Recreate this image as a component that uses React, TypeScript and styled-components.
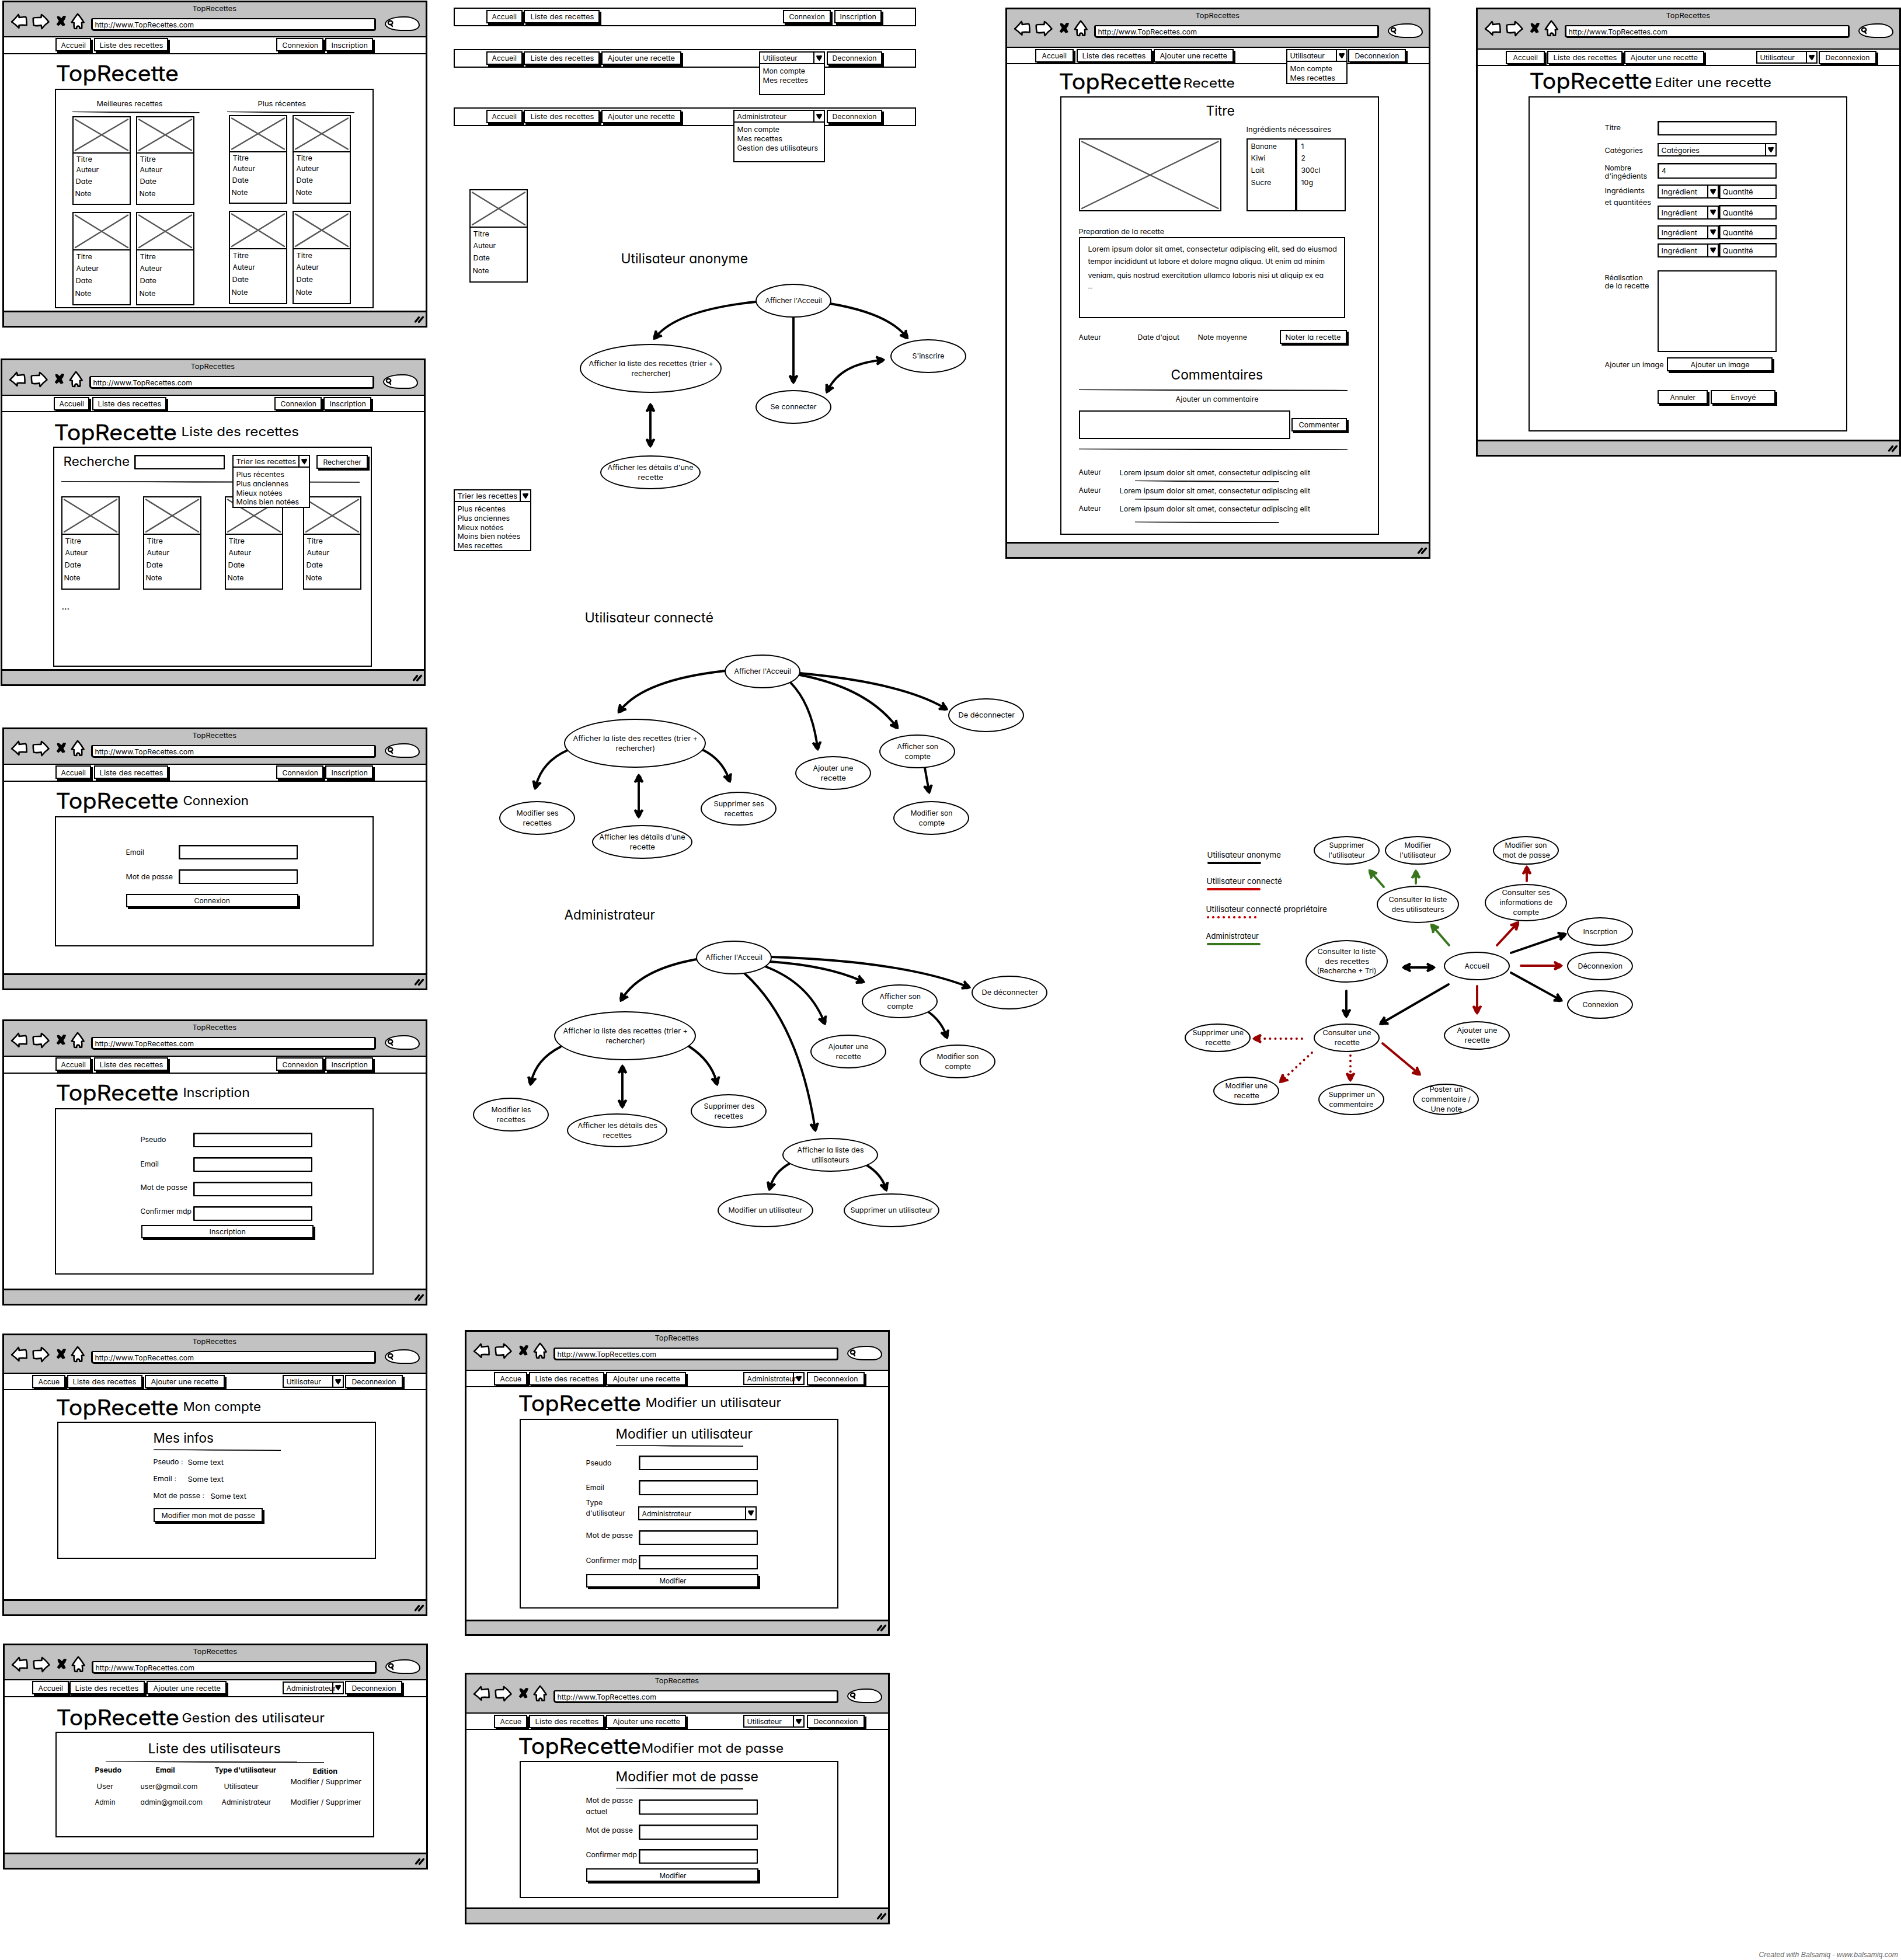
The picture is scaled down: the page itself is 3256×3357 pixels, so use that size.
import React, { useLayoutEffect, useRef } from "react";
import styled, { createGlobalStyle } from "styled-components";

const INK = "#000";
const CHROME = "#c2c2c2";

const Global = createGlobalStyle`
  * { box-sizing: border-box; }
  html, body { margin: 0; background: #fff; }
  body {
    font-family: Inter, "Open Sans", sans-serif;
    font-feature-settings: "cv11", "ss03";
    color: ${INK};
  }
`;

/* ---------- lettering ---------- */

const WIDTHS: Record<string, number> = {
  "Accueil": 43, "Accue": 37, "Liste des recettes": 109.5, "Ajouter une recette": 116,
  "Connexion": 62, "Inscription": 63, "Deconnexion": 76.5, "Utilisateur": 60, "Administrateur": 85,
  "Titre": 28, "Auteur": 39, "Date": 29, "Note": 28.5, "Meilleures recettes": 113.5,
  "Plus récentes": 83, "Plus anciennes": 90, "Mieux notées": 79.5, "Moins bien notées": 108,
  "Mes recettes": 78, "Mon compte": 73, "Trier les recettes": 103, "Gestion des utilisateurs": 139,
  "Rechercher": 66, "http://www.TopRecettes.com": 170, "TopRecettes": 76, "Email": 32,
  "Mot de passe": 81, "Confirmer mdp": 88, "Pseudo": 44.5, "Pseudo :": 51.5, "Email :": 40,
  "Mot de passe :": 88, "Some text": 62, "Modifier mon mot de passe": 161, "User": 29, "Admin": 35.5,
  "user@gmail.com": 98.5, "admin@gmail.com": 107, "Type d'utilisateur": 106, "Edition": 43,
  "Modifier / Supprimer": 122, "Modifier": 46.5, "Type": 29, "d'utilisateur": 68, "actuel": 37,
  "Ingrédients nécessaires": 146, "Banane": 45, "Kiwi": 25.5, "Lait": 23.5, "Sucre": 35.5,
  "300cl": 33.5, "10g": 21, "Preparation de la recette": 147, "Date d'ajout": 72, "Note moyenne": 85,
  "Noter la recette": 95.5, "Ajouter un commentaire": 142.5, "Commenter": 70,
  "Lorem ipsum dolor sit amet, consectetur adipiscing elit": 327,
  "Lorem ipsum dolor sit amet, consectetur adipiscing elit, sed do eiusmod": 427,
  "tempor incididunt ut labore et dolore magna aliqua. Ut enim ad minim": 406,
  "veniam, quis nostrud exercitation ullamco laboris nisi ut aliquip ex ea": 404,
  "Catégories": 66, "Nombre": 46, "d'ingédients": 73, "Ingrédients": 69, "et quantitées": 80,
  "Ingrédient": 62, "Quantité": 52.5, "Réalisation": 66, "de la recette": 76.5,
  "Ajouter un image": 101.5, "Annuler": 44, "Envoyé": 43.5,
  "Afficher l'Acceuil": 98, "Afficher la liste des recettes (trier +": 214, "rechercher)": 68,
  "Se connecter": 79.5, "S'inscrire": 55.5, "Afficher les détails d'une": 147.5, "recette": 44,
  "De déconnecter": 97, "Afficher son": 71, "compte": 45, "Ajouter une": 69.5, "Modifier ses": 72.5,
  "recettes": 50, "Supprimer ses": 87, "Modifier son": 72.5, "Modifier les": 68.5,
  "Supprimer des": 87, "Afficher les détails des": 137, "Afficher la liste des": 114.5,
  "utilisateurs": 64.5, "Modifier un utilisateur": 127.5, "Supprimer un utilisateur": 141.5,
  "Supprimer": 61, "l'utilisateur": 63, "mot de passe": 82, "Consulter la liste": 100.5,
  "des utilisateurs": 90.5, "Consulter ses": 83, "informations de": 91, "Inscrption": 59.5,
  "Déconnexion": 77, "des recettes": 76, "(Recherche + Tri)": 102.5, "Consulter une": 83.5,
  "Supprimer une": 88, "Modifier une": 73, "Supprimer un": 80, "commentaire": 76.5,
  "Poster un": 57.5, "commentaire /": 85, "Une note": 54,
};

const Slot = styled.span`
  display: inline-block;
  flex: none;
  white-space: pre;
  text-align: left;
`;

const Glyphs = styled.span<{ $size: number; $bold?: boolean }>`
  display: inline-block;
  padding-left: 0.5px;
  transform-origin: 0 50%;
  font-size: ${(p) => p.$size}px;
  font-weight: ${(p) => (p.$bold ? 700 : 400)};
`;

// Text widened so that it fills its lettering width.
function T({ children, w, size = 12, bold }: { children: string; w?: number; size?: number; bold?: boolean }) {
  const slot = useRef<HTMLSpanElement>(null);
  const glyphs = useRef<HTMLSpanElement>(null);
  const target = w ?? WIDTHS[children];
  useLayoutEffect(() => {
    const box = slot.current;
    const el = glyphs.current;
    if (!box || !el || !target) return;
    el.style.transform = "none";
    const natural = el.getBoundingClientRect().width;
    box.style.width = `${target}px`;
    el.style.transform = `scaleX(${target / natural})`;
  }, [children, target, size]);
  return (
    <Slot ref={slot}>
      <Glyphs ref={glyphs} $size={size} $bold={bold}>{children}</Glyphs>
    </Slot>
  );
}

/* ---------- layout primitives ---------- */

const Board = styled.main`
  position: relative;
  width: 3256px;
  height: 3357px;
  overflow: hidden;
  background: #fff;
`;

const Pinned = styled.div<{ $x: number; $y: number }>`
  position: absolute;
  left: ${(p) => p.$x}px;
  top: ${(p) => p.$y}px;
`;

const Row = styled.div<{ $h: number; $mt?: number; $pl?: number; $top?: boolean }>`
  display: flex;
  flex: none;
  align-items: ${(p) => (p.$top ? "flex-start" : "center")};
  height: ${(p) => p.$h}px;
  margin-top: ${(p) => p.$mt ?? 0}px;
  padding-left: ${(p) => p.$pl ?? 0}px;
`;

const Gap = styled.div<{ $w: number }>`
  flex: none;
  width: ${(p) => p.$w}px;
`;

const Label = styled.div<{ $w: number; $dy?: number; $lh?: number }>`
  flex: none;
  display: flex;
  flex-direction: column;
  align-items: flex-start;
  width: ${(p) => p.$w}px;
  line-height: ${(p) => p.$lh ?? 16}px;
  margin-top: ${(p) => (p.$dy ?? 0) * 2}px;
`;

const Rule = styled.div<{ $w: number; $ml?: number; $mt?: number }>`
  flex: none;
  width: ${(p) => p.$w}px;
  height: 3px;
  margin: ${(p) => p.$mt ?? 0}px 0 -1px ${(p) => p.$ml ?? 0}px;
  background: ${INK};
  clip-path: polygon(0 0, 100% 30%, 100% 92%, 45% 80%, 0 36%);
`;

/* ---------- controls ---------- */

const Button = styled.div<{ $w: number; $h?: number; $ml?: number; $mt?: number }>`
  flex: none;
  display: flex;
  align-items: center;
  justify-content: center;
  width: ${(p) => p.$w}px;
  height: ${(p) => p.$h ?? 23}px;
  margin-left: ${(p) => p.$ml ?? 0}px;
  margin-top: ${(p) => p.$mt ?? 0}px;
  border: 2px solid ${INK};
  background: #fff;
  box-shadow: 3px 3px 0 ${INK};
  line-height: 16px;
`;

const Field = styled.div<{ $w: number; $h: number }>`
  flex: none;
  display: flex;
  align-items: center;
  width: ${(p) => p.$w}px;
  height: ${(p) => p.$h}px;
  padding-left: 4px;
  border: 2px solid ${INK};
  border-radius: 1px;
  box-shadow: inset 0.6px 0.6px 0 ${INK};
  background: #fff;
  line-height: 16px;
`;

const SelectBox = styled.div<{ $w: number; $h: number; $ml?: number }>`
  position: relative;
  flex: none;
  display: flex;
  align-items: center;
  justify-content: space-between;
  width: ${(p) => p.$w}px;
  height: ${(p) => p.$h}px;
  margin-left: ${(p) => p.$ml ?? 0}px;
  padding-left: 4px;
  border: 2px solid ${INK};
  background: #fff;
  line-height: 16px;
`;

const SelectText = styled.div`
  flex: 1;
  min-width: 0;
`;

const Arrow = styled.div`
  flex: none;
  display: flex;
  align-items: center;
  justify-content: center;
  align-self: stretch;
  width: 18px;
  border-left: 2px solid ${INK};
`;

const Menu = styled.div<{ $h: number }>`
  position: absolute;
  z-index: 2;
  top: 100%;
  left: -2px;
  right: -2px;
  height: ${(p) => p.$h}px;
  padding: 3px 0 0 4px;
  border: 2px solid ${INK};
  background: #fff;
`;

const MenuItem = styled.div`
  height: 15.8px;
  line-height: 15.8px;
`;

function Select({ label, w, h = 22, ml, menu, menuH = 0 }: { label: string; w: number; h?: number; ml?: number; menu?: string[]; menuH?: number }) {
  return (
    <SelectBox $w={w} $h={h} $ml={ml}>
      <SelectText><T>{label}</T></SelectText>
      <Arrow>
        <svg width="12" height="11" viewBox="0 0 12 11">
          <path d="M1 1.5 Q3.5 0.4 6 1.3 Q9 0.2 11.2 1.6 Q10.6 5 6.6 10.4 Q1.6 6 1 1.5Z" fill={INK} />
        </svg>
      </Arrow>
      {menu && <Menu $h={menuH}>{menu.map((m) => <MenuItem key={m}><T>{m}</T></MenuItem>)}</Menu>}
    </SelectBox>
  );
}

/* ---------- navigation bar ---------- */

type NavItem = { label: string; gap: number; w: number; select?: boolean; menu?: string[]; menuH?: number };

const NavBar = styled.nav<{ $h: number; $framed?: boolean }>`
  flex: none;
  display: flex;
  align-items: center;
  height: ${(p) => p.$h}px;
  ${(p) => (p.$framed ? "width: 792px;" : "")}
  padding-bottom: ${(p) => (p.$h === 30 ? 0 : 2)}px;
  border: solid ${INK};
  border-width: ${(p) => (p.$framed ? "2px" : "2px 0")};
  background: #fff;
`;

function Nav({ items, h, framed }: { items: NavItem[]; h: number; framed?: boolean }) {
  return (
    <NavBar $h={h} $framed={framed}>
      {items.map((i) =>
        i.select ? (
          <Select key={i.label} label={i.label} w={i.w} ml={i.gap} menu={i.menu} menuH={i.menuH} />
        ) : (
          <Button key={i.label} $w={i.w} $ml={i.gap}><T>{i.label}</T></Button>
        )
      )}
    </NavBar>
  );
}

const anonymousNav: NavItem[] = [
  { label: "Accueil", gap: 88, w: 61 },
  { label: "Liste des recettes", gap: 4.5, w: 127.5 },
  { label: "Connexion", gap: 185, w: 81 },
  { label: "Inscription", gap: 3, w: 82 },
];

const memberNav = (
  first: string, who: string, g: number[], menu?: string[], menuH?: number
): NavItem[] => [
  { label: first, gap: g[0], w: g[1] },
  { label: "Liste des recettes", gap: g[2], w: 129 },
  { label: "Ajouter une recette", gap: g[3], w: 137 },
  { label: who, gap: g[4], w: 105, select: true, menu, menuH },
  { label: "Deconnexion", gap: g[5], w: 98.5 },
];

/* ---------- browser window ---------- */

const Frame = styled.section<{ $x: number; $y: number; $h: number }>`
  position: absolute;
  left: ${(p) => p.$x}px;
  top: ${(p) => p.$y}px;
  display: flex;
  flex-direction: column;
  width: 728px;
  height: ${(p) => p.$h}px;
  border: 3px solid ${INK};
  background: #fff;
`;

const Header = styled.header<{ $h: number }>`
  flex: none;
  height: ${(p) => p.$h}px;
  background: ${CHROME};
`;

const WindowTitle = styled.div`
  height: 18px;
  padding-right: 2px;
  line-height: 18px;
  text-align: center;
`;

const Toolbar = styled.div`
  display: flex;
  align-items: flex-start;
  height: 32px;
  padding-left: 8px;
`;

const Address = styled.div`
  flex: none;
  width: 488px;
  height: 22px;
  margin: 8.5px 15px 0 5px;
  padding-left: 2.5px;
  border: 3px solid ${INK};
  border-top-width: 2px;
  border-radius: 3px 3px 4px 5px;
  background: #fff;
  line-height: 16px;
`;

const Search = styled.div`
  flex: none;
  width: 60px;
  height: 25px;
  margin-top: 6px;
  padding: 4px 0 0 1.5px;
  border: 2.6px solid ${INK};
  border-radius: 31px 24px 16px 28px / 13px 15px 10px 12px;
  background: #fff;
`;

const Magnifier = styled.svg`
  display: block;
`;

const Body = styled.div`
  flex: 1;
  min-height: 0;
`;

const Status = styled.footer<{ $h: number }>`
  flex: none;
  display: flex;
  align-items: center;
  justify-content: flex-end;
  height: ${(p) => p.$h}px;
  padding-right: 2px;
  border-top: 3px solid ${INK};
  background: ${CHROME};
`;

const Brand = styled.div<{ $gap: number }>`
  flex: none;
  height: 40px;
  line-height: 40px;
  margin-right: ${(p) => p.$gap}px;

  span span {
    -webkit-text-stroke: 0.4px ${INK};
  }
`;

const SubTitle = styled.div<{ $dy: number }>`
  line-height: 26px;
  margin-top: ${(p) => p.$dy * 2}px;
`;

const Panel = styled.div<{ $ml: number; $mt: number; $h: number }>`
  width: 546px;
  height: ${(p) => p.$h}px;
  margin: ${(p) => p.$mt}px 0 0 ${(p) => p.$ml}px;
  border: 2px solid ${INK};
  background: #fff;
`;

type WindowProps = {
  x: number; y: number; h: number; head: number; nav: NavItem[]; navH: number; foot: number;
  brandTop: number; sub?: string; subW?: number; subGap?: number; subDy?: number;
  panelLeft: number; panelTop: number; panelH: number; children?: React.ReactNode;
};

function BrowserIcons() {
  return (
    <svg width="136" height="30" viewBox="15 22 136 30" fill="#fff" stroke={INK} strokeWidth="2.6" strokeLinejoin="round" strokeLinecap="round">
      <path d="M20 37.5 Q26 32 31.5 25 Q33 27 32.6 30 L44 28.8 Q45.6 30 45.6 43.3 Q38 42.6 32.6 43.2 L32.4 47.8 Q27 42 20 37.5Z" />
      <path d="M56.8 31 Q57 29.6 70.4 30 L71 25 Q77 29 83.5 37.5 Q77 42 71.6 49 L70.6 43.4 Q63 44.8 57.8 43.6 Q56.6 37 56.8 31Z" />
      <path d="M98.6 28.8 Q102 28 105 33 Q107.4 29.6 109 27.8 L112 28.4 Q111 33 107.6 36.4 Q109.5 40 110.6 42.6 L107.2 43.6 Q105.6 42 104.4 39.6 L100 43.4 L97.8 41.6 Q100.5 38 102 35.6 Q98.6 32 98.6 28.8Z" fill={INK} strokeWidth="1.8" />
      <path d="M133 23.8 Q138 29 143.6 38.4 L139.8 38.8 Q140.6 44 140 48.6 L136.4 48.6 Q136.6 44.6 133.6 44.6 Q131 44.6 131.2 49 L127.4 48.8 Q126.2 44 126.8 39 L122.8 38.2 Q128 30 133 23.8Z" />
    </svg>
  );
}

function BrowserWindow(p: WindowProps) {
  return (
    <Frame $x={p.x} $y={p.y} $h={p.h}>
      <Header $h={p.head}>
        <WindowTitle><T>TopRecettes</T></WindowTitle>
        <Toolbar>
          <BrowserIcons />
          <Address><T>http://www.TopRecettes.com</T></Address>
          <Search>
            <Magnifier width="12" height="13" viewBox="0 0 12 13" fill="none" stroke={INK} strokeWidth="2.4" strokeLinecap="round">
              <ellipse cx="5.6" cy="5" rx="3.7" ry="3.3" />
              <path d="M6.4 7.6 L9 11" />
            </Magnifier>
          </Search>
        </Toolbar>
      </Header>
      <Nav items={p.nav} h={p.navH} />
      <Body>
        <Row $h={40} $mt={p.brandTop} $pl={88}>
          <Brand $gap={p.subGap ?? 0}><T size={37} w={211}>TopRecette</T></Brand>
          {p.sub && <SubTitle $dy={p.subDy ?? 0}><T size={22} w={p.subW}>{p.sub}</T></SubTitle>}
        </Row>
        <Panel $ml={p.panelLeft} $mt={p.panelTop} $h={p.panelH}>{p.children}</Panel>
      </Body>
      <Status $h={p.foot}>
        <svg width="18" height="14" viewBox="0 0 18 14" stroke={INK} strokeWidth="3.4" strokeLinecap="round">
          <path d="M2.5 11 L8.5 3.6 M8.5 11.4 L15.5 3.2" />
        </svg>
      </Status>
    </Frame>
  );
}

/* ---------- recipe card ---------- */

const CardBox = styled.article<{ $tall?: boolean; $ml?: number }>`
  flex: none;
  width: 100px;
  height: ${(p) => (p.$tall ? 160 : 152)}px;
  margin-left: ${(p) => p.$ml ?? 0}px;
  border: 2px solid ${INK};
  background: #fff;
`;

const Picture = styled.div<{ $h: number; $w?: number; $boxed?: boolean }>`
  flex: none;
  width: ${(p) => (p.$w ? p.$w + "px" : "auto")};
  height: ${(p) => p.$h}px;
  border: solid ${INK};
  border-width: ${(p) => (p.$boxed ? "2px" : "0 0 2px")};
`;

const CardLine = styled.div<{ $h: number; $pl: number }>`
  height: ${(p) => p.$h}px;
  line-height: ${(p) => p.$h}px;
  padding-left: ${(p) => p.$pl}px;
`;

function Cross({ w, h }: { w: number; h: number }) {
  return (
    <svg width={w} height={h} viewBox={`0 0 ${w} ${h}`} display="block" stroke="#555" strokeWidth="2.4" strokeLinecap="round">
      <path d={`M3 3.5 L${w - 3} ${h - 3} M${w - 3} 3.5 L3 ${h - 3}`} />
    </svg>
  );
}

function Card({ tall, ml }: { tall?: boolean; ml?: number }) {
  const img = tall ? 64 : 61.5;
  const a = tall ? 20 : 19;
  const b = tall ? 22 : 21;
  return (
    <CardBox $tall={tall} $ml={ml}>
      <Picture $h={img}><Cross w={96} h={img - 2} /></Picture>
      <CardLine $h={a - 1.5} $pl={4}><T>Titre</T></CardLine>
      <CardLine $h={a} $pl={4}><T>Auteur</T></CardLine>
      <CardLine $h={b} $pl={3.5}><T>Date</T></CardLine>
      <CardLine $h={b} $pl={2.5}><T>Note</T></CardLine>
    </CardBox>
  );
}

/* ---------- forms ---------- */

function InputRow({ label, mt, pl, lw = 91, dy, lh, h = 25.5, children }: { label: string[]; mt: number; pl: number; lw?: number; dy?: number; lh?: number; h?: number; children?: React.ReactNode }) {
  return (
    <Row $h={h} $mt={mt} $pl={pl}>
      <Label $w={lw} $dy={dy} $lh={lh}>{label.map((l) => <T key={l}>{l}</T>)}</Label>
      {children ?? <Field $w={204} $h={h} />}
    </Row>
  );
}

const PanelTitle = ({ text, w, mt, pl }: { text: string; w: number; mt: number; pl: number }) => (
  <Row $h={26} $mt={mt} $pl={pl}><T size={22.5} w={w}>{text}</T></Row>
);

/* ---------- home page ---------- */

const Columns = styled.div`
  display: flex;
  padding-left: 27.6px;
  gap: 47.4px;
`;

const Section = styled.div`
  flex: none;
  width: 218px;
`;

function Shelf({ title, pl, cardTop, cardLeft }: { title: string; pl: number; cardTop: number; cardLeft: number }) {
  return (
    <Section>
      <Row $h={18} $mt={12.5} $pl={pl}><T>{title}</T></Row>
      <Rule $w={218} $mt={6.5} />
      <Row $h={152} $mt={cardTop} $pl={cardLeft}><Card /><Card ml={9.5} /></Row>
      <Row $h={160} $mt={12} $pl={cardLeft}><Card tall /><Card tall ml={9.5} /></Row>
    </Section>
  );
}

/* ---------- users table ---------- */

const TableRow = styled.div<{ $mt: number }>`
  display: grid;
  grid-template-columns: 78px 127px 130px 150px;
  align-items: center;
  height: 20px;
  margin-top: ${(p) => p.$mt}px;
  padding-left: 64.5px;
`;

const Cell = styled.div<{ $dx?: number; $dy?: number }>`
  line-height: 20px;
  padding-left: ${(p) => p.$dx ?? 0}px;
  margin-top: ${(p) => (p.$dy ?? 0) * 2}px;
`;

/* ---------- recipe page ---------- */

const ListBox = styled.div<{ $pl: number }>`
  flex: none;
  width: 85px;
  height: 125px;
  padding: 0 0 0 ${(p) => p.$pl}px;
  border: 2px solid ${INK};
`;

const ListItem = styled.div`
  height: 20.7px;
  line-height: 20.7px;
`;

const TextBox = styled.div<{ $w: number; $h: number; $ml?: number; $mt?: number }>`
  flex: none;
  width: ${(p) => p.$w}px;
  height: ${(p) => p.$h}px;
  margin: ${(p) => p.$mt ?? 0}px 0 0 ${(p) => p.$ml ?? 0}px;
  border: 2px solid ${INK};
`;

const LOREM = "Lorem ipsum dolor sit amet, consectetur adipiscing elit";

function Comment({ mt }: { mt: number }) {
  return (
    <Row $h={18} $mt={mt} $pl={29}>
      <Label $w={69.5}><T>Auteur</T></Label>
      <T>{LOREM}</T>
    </Row>
  );
}

/* ---------- diagrams ---------- */

const Ellipse = styled.div<{ $x: number; $y: number; $w: number; $h: number }>`
  position: absolute;
  left: ${(p) => p.$x}px;
  top: ${(p) => p.$y}px;
  display: flex;
  flex-direction: column;
  align-items: center;
  justify-content: center;
  width: ${(p) => p.$w}px;
  height: ${(p) => p.$h}px;
  padding-bottom: 1px;
  border: 2px solid ${INK};
  border-radius: 50%;
  background: #fff;
  line-height: 15.8px;
`;

type NodeDef = [number, number, number, number, ...string[]];

const LISTE = ["Afficher la liste des recettes (trier +", "rechercher)"];

const nodes: NodeDef[] = [
  [1294, 486, 130, 58, "Afficher l'Acceuil"],
  [993, 589, 243, 84, ...LISTE],
  [1525, 581, 130, 58, "S'inscrire"],
  [1294, 668, 130, 58, "Se connecter"],
  [1028, 780, 172, 58, "Afficher les détails d'une", "recette"],

  [1241, 1121, 130, 58, "Afficher l'Acceuil"],
  [966, 1231, 243, 84, ...LISTE],
  [1624, 1196, 130, 58, "De déconnecter"],
  [1506, 1258, 130, 58, "Afficher son", "compte"],
  [1362, 1295, 130, 58, "Ajouter une", "recette"],
  [855, 1372, 130, 58, "Modifier ses", "recettes"],
  [1200, 1356, 130, 58, "Supprimer ses", "recettes"],
  [1014, 1413, 172, 58, "Afficher les détails d'une", "recette"],
  [1530, 1372, 130, 58, "Modifier son", "compte"],

  [1192, 1611, 130, 58, "Afficher l'Acceuil"],
  [949, 1732, 243, 84, ...LISTE],
  [810, 1880, 130, 58, "Modifier les", "recettes"],
  [971, 1907, 172, 58, "Afficher les détails des", "recettes"],
  [1183, 1874, 130, 58, "Supprimer des", "recettes"],
  [1388, 1772, 130, 58, "Ajouter une", "recette"],
  [1476, 1686, 130, 58, "Afficher son", "compte"],
  [1664, 1671, 130, 58, "De déconnecter"],
  [1575, 1789, 130, 58, "Modifier son", "compte"],
  [1340, 1949, 164, 58, "Afficher la liste des", "utilisateurs"],
  [1229, 2044, 164, 58, "Modifier un utilisateur"],
  [1445, 2044, 164, 58, "Supprimer un utilisateur"],

  [2250, 1432, 113, 49, "Supprimer", "l'utilisateur"],
  [2372, 1432, 113, 49, "Modifier", "l'utilisateur"],
  [2557, 1432, 113, 49, "Modifier son", "mot de passe"],
  [2358, 1517, 141, 64, "Consulter la liste", "des utilisateurs"],
  [2543, 1514, 141, 64, "Consulter ses", "informations de", "compte"],
  [2684, 1571, 113, 49, "Inscrption"],
  [2473, 1630, 113, 49, "Accueil"],
  [2684, 1630, 113, 49, "Déconnexion"],
  [2684, 1696, 113, 49, "Connexion"],
  [2236, 1610, 141, 73, "Consulter la liste", "des recettes", "(Recherche + Tri)"],
  [2029, 1753, 113, 49, "Supprimer une", "recette"],
  [2250, 1753, 113, 49, "Consulter une", "recette"],
  [2473, 1749, 113, 49, "Ajouter une", "recette"],
  [2078, 1844, 113, 49, "Modifier une", "recette"],
  [2258, 1856, 113, 54, "Supprimer un", "commentaire"],
  [2420, 1856, 113, 54, "Poster un", "commentaire /", "Une note"],
];

type Pt = [number, number];
type Link = { from: Pt; to: Pt; via?: Pt; both?: boolean; color?: string; dotted?: boolean };

const RED = "#990000";
const GREEN = "#38761d";

const links: Link[] = [
  { from: [1294, 517], to: [1119, 582], via: [1162, 531] },
  { from: [1422, 520], to: [1556, 581], via: [1518, 536] },
  { from: [1359, 544], to: [1359, 658] },
  { from: [1415, 674], to: [1516, 616], via: [1440, 624], both: true },
  { from: [1114, 690], to: [1114, 767], both: true },

  { from: [1242, 1149], to: [1058, 1222], via: [1105, 1164] },
  { from: [1354, 1169], to: [1401, 1286], via: [1390, 1206] },
  { from: [1370, 1156], to: [1539, 1249], via: [1483, 1178] },
  { from: [1370, 1153], to: [1624, 1216], via: [1543, 1169] },
  { from: [972, 1285], to: [916, 1353], via: [929, 1304] },
  { from: [1203, 1284], to: [1251, 1341], via: [1236, 1300] },
  { from: [1094, 1325], to: [1094, 1402], both: true },
  { from: [1584, 1315], to: [1592, 1360] },

  { from: [1193, 1643], to: [1062, 1716], via: [1098, 1660] },
  { from: [1275, 1667], to: [1397, 1939], via: [1367, 1750] },
  { from: [1310, 1655], to: [1414, 1756], via: [1384, 1683] },
  { from: [1319, 1647], to: [1482, 1683], via: [1417, 1654] },
  { from: [1320, 1639], to: [1663, 1692], via: [1543, 1646] },
  { from: [960, 1793], to: [908, 1860], via: [919, 1814] },
  { from: [1180, 1792], to: [1229, 1860], via: [1218, 1817] },
  { from: [1066, 1823], to: [1066, 1899], both: true },
  { from: [1590, 1733], to: [1623, 1780], via: [1612, 1749] },
  { from: [1352, 1993], to: [1317, 2040], via: [1327, 2007] },
  { from: [1485, 1996], to: [1519, 2041], via: [1509, 2011] },

  { from: [2370, 1519], to: [2344, 1489], color: GREEN },
  { from: [2425, 1513], to: [2425, 1489], color: GREEN },
  { from: [2482, 1619], to: [2450, 1582], color: GREEN },
  { from: [2615, 1509], to: [2615, 1482], color: RED },
  { from: [2564, 1619], to: [2602, 1578], color: RED },
  { from: [2605, 1654], to: [2677, 1654], color: RED },
  { from: [2530, 1689], to: [2530, 1738], color: RED },
  { from: [2368, 1787], to: [2434, 1842], color: RED },
  { from: [2230, 1779], to: [2145, 1779], color: RED, dotted: true },
  { from: [2247, 1803], to: [2191, 1855], color: RED, dotted: true },
  { from: [2313, 1808], to: [2313, 1853], color: RED, dotted: true },
  { from: [2588, 1632], to: [2684, 1599] },
  { from: [2588, 1666], to: [2677, 1715] },
  { from: [2481, 1686], to: [2362, 1755] },
  { from: [2306, 1697], to: [2306, 1744] },
  { from: [2401, 1657], to: [2459, 1657], both: true },
];

const Canvas = styled.svg`
  position: absolute;
  inset: 0;
`;

const angle = (a: Pt, b: Pt) => (Math.atan2(b[1] - a[1], b[0] - a[0]) * 180) / Math.PI;

// Moves a line end back from its arrow tip so that the point stays sharp.
const pull = (tip: Pt, other: Pt): Pt => {
  const d = Math.hypot(tip[0] - other[0], tip[1] - other[1]);
  return [tip[0] + ((other[0] - tip[0]) * 8) / d, tip[1] + ((other[1] - tip[1]) * 8) / d];
};

function Head({ at, deg, color }: { at: Pt; deg: number; color: string }) {
  return (
    <path
      transform={`translate(${at[0]} ${at[1]}) rotate(${deg})`}
      d="M-1 0 L-5 -3 L-10 -5 L-14 -7.4 L-15 -5 L-13 -3 L-13.4 3 L-15 5.4 L-13.6 7.4 L-9 5 L-5 3.4Z"
      fill={color} stroke={color} strokeWidth="1.6" strokeLinejoin="round"
    />
  );
}

function LinkLine({ from, to, via, both, color = INK, dotted }: Link) {
  const near = via ?? to;
  const far = via ?? from;
  const s = both ? pull(from, near) : from;
  const e = pull(to, far);
  return (
    <g>
      <path
        d={via ? `M${s} Q${via} ${e}` : `M${s} L${e}`}
        fill="none" stroke={color} strokeWidth={dotted ? 4 : 3.9} strokeLinecap="round"
        strokeDasharray={dotted ? "0.1 9" : undefined}
      />
      <Head at={to} deg={angle(far, to)} color={color} />
      {both && <Head at={from} deg={angle(near, from)} color={color} />}
    </g>
  );
}

const LegendList = styled.div`
  display: flex;
  flex-direction: column;
`;

const LegendItem = styled.div<{ $mt: number; $ml: number }>`
  height: 24px;
  margin: ${(p) => p.$mt}px 0 0 ${(p) => p.$ml}px;
  line-height: 19px;
`;

const Swatch = styled.div<{ $color: string; $dotted?: boolean }>`
  width: ${(p) => (p.$dotted ? 86 : 92)}px;
  height: 4px;
  margin: 2px 0 0 1.5px;
  border-radius: 2px;
  background: ${(p) =>
    p.$dotted
      ? `radial-gradient(circle at 2px 2px, ${p.$color} 1.8px, transparent 2.3px) 0 0 / 9px 4px repeat-x`
      : p.$color};
`;

const Heading = styled(Pinned)`
  line-height: 26px;
`;

const Credit = styled.div`
  position: absolute;
  right: 5px;
  bottom: 1px;
  font-family: "Liberation Sans", Arial, sans-serif;
  font-style: italic;
  line-height: 16px;
  color: #666;
`;

/* ---------- the board ---------- */

export default function App() {
  return (
    <>
      <Global />
      <Board>
        <BrowserWindow x={4} y={1} h={560} head={58} nav={anonymousNav} navH={31} foot={26}
          brandTop={13} panelLeft={87} panelTop={6} panelH={376}>
          <Columns>
            <Shelf title="Meilleures recettes" pl={41.4} cardTop={6} cardLeft={0} />
            <Shelf title="Plus récentes" pl={52.5} cardTop={4} cardLeft={3} />
          </Columns>
        </BrowserWindow>

        <BrowserWindow x={1} y={614} h={561} head={59} nav={anonymousNav} navH={30} foot={26}
          brandTop={15} sub="Liste des recettes" subW={202} subGap={6.5} subDy={-1.5} panelLeft={87} panelTop={4} panelH={377}>
          <Row $h={25} $mt={12} $pl={15} $top>
            <Label $w={122} $lh={24}><T size={21} w={114}>Recherche</T></Label>
            <Field $w={155} $h={25} />
            <Select label="Trier les recettes" w={133} ml={13}
              menu={["Plus récentes", "Plus anciennes", "Mieux notées", "Moins bien notées"]} menuH={71} />
            <Button $w={88} $h={24} $ml={10.5}><T>Rechercher</T></Button>
          </Row>
          <Rule $w={511} $ml={12} $mt={20} />
          <Row $h={160} $mt={24} $pl={11.7}>
            <Card tall /><Card tall ml={40} /><Card tall ml={40} /><Card tall ml={34} />
          </Row>
          <Row $h={20} $mt={18} $pl={12}><T size={16} w={14}>...</T></Row>
        </BrowserWindow>

        <BrowserWindow x={4} y={1246} h={450} head={59} nav={anonymousNav} navH={31} foot={26}
          brandTop={12.5} sub="Connexion" subW={113} subGap={7} subDy={0} panelLeft={87} panelTop={6} panelH={223}>
          <InputRow label={["Email"]} mt={47} pl={118.5} dy={-0.5} />
          <InputRow label={["Mot de passe"]} mt={16.5} pl={118.5} />
          <Button $w={295} $ml={119.5} $mt={16.5}><T>Connexion</T></Button>
        </BrowserWindow>

        <BrowserWindow x={4} y={1746} h={490} head={59} nav={anonymousNav} navH={31} foot={26}
          brandTop={13} sub="Inscription" subW={115} subGap={7} subDy={-0.5} panelLeft={87} panelTop={5.5} panelH={285}>
          <InputRow label={["Pseudo"]} mt={40} pl={144} dy={-1.3} />
          <InputRow label={["Email"]} mt={16.6} pl={144} dy={-1} />
          <InputRow label={["Mot de passe"]} mt={16.6} pl={144} dy={-3.5} />
          <InputRow label={["Confirmer mdp"]} mt={16.6} pl={144} dy={-5} />
          <Button $w={295} $ml={145.5} $mt={6.5}><T>Inscription</T></Button>
        </BrowserWindow>

        <BrowserWindow x={4} y={2284} h={484} head={64} nav={memberNav("Accue", "Utilisateur", [48, 57, 2.5, 4, 99, 2.5])} navH={30} foot={26}
          brandTop={9.7} sub="Mon compte" subW={134} subGap={7} subDy={-1} panelLeft={91} panelTop={4.5} panelH={235}>
          <PanelTitle text="Mes infos" w={104} mt={12} pl={162} />
          <Rule $w={218} $ml={163} $mt={7} />
          <Row $h={18} $mt={9.5} $pl={162}><Label $w={59}><T>Pseudo :</T></Label><T>Some text</T></Row>
          <Row $h={18} $mt={11} $pl={162}><Label $w={59}><T>Email :</T></Label><T>Some text</T></Row>
          <Row $h={18} $mt={11.5} $pl={162}><Label $w={97.5}><T>Mot de passe :</T></Label><T>Some text</T></Row>
          <Button $w={187} $h={24} $ml={163} $mt={13}><T>Modifier mon mot de passe</T></Button>
        </BrowserWindow>

        <BrowserWindow x={5} y={2815} h={387} head={58} nav={memberNav("Accueil", "Administrateur", [46.5, 63, 1, 3.5, 95.5, 2])} navH={31} foot={26}
          brandTop={14.7} sub="Gestion des utilisateur" subW={245} subGap={4} subDy={1} panelLeft={87} panelTop={4.7} panelH={181}>
          <PanelTitle text="Liste des utilisateurs" w={228} mt={13} pl={156} />
          <Rule $w={374} $ml={84} $mt={9} />
          <TableRow $mt={0.5}>
            <Cell><T bold w={46}>Pseudo</T></Cell>
            <Cell $dx={26}><T bold w={33.5}>Email</T></Cell>
            <Cell><T bold>Type d'utilisateur</T></Cell>
            <Cell $dx={38} $dy={1.5}><T bold>Edition</T></Cell>
          </TableRow>
          <TableRow $mt={9}>
            <Cell $dx={3}><T>User</T></Cell>
            <Cell><T>user@gmail.com</T></Cell>
            <Cell $dx={16.5}><T>Utilisateur</T></Cell>
            <Cell $dy={-8}><T>Modifier / Supprimer</T></Cell>
          </TableRow>
          <TableRow $mt={7}>
            <Cell><T>Admin</T></Cell>
            <Cell><T>admin@gmail.com</T></Cell>
            <Cell $dx={12}><T>Administrateur</T></Cell>
            <Cell><T>Modifier / Supprimer</T></Cell>
          </TableRow>
        </BrowserWindow>

        <BrowserWindow x={796} y={2278} h={524} head={65} nav={memberNav("Accue", "Administrateur", [47.4, 57, 2.5, 3.5, 97.5, 4.5])} navH={30} foot={25}
          brandTop={8.3} sub="Modifier un utilisateur" subW={233} subGap={7} subDy={-1.5} panelLeft={91} panelTop={5.4} panelH={325}>
          <PanelTitle text="Modifier un utilisateur" w={235} mt={11.3} pl={162} />
          <Rule $w={218} $ml={163} $mt={6} />
          <InputRow label={["Pseudo"]} mt={16} pl={111} dy={-1} />
          <InputRow label={["Email"]} mt={16.6} pl={111} dy={-1} />
          <InputRow label={["Type", "d'utilisateur"]} mt={19.4} pl={111} h={23.6} lw={90} dy={-9.4} lh={17.5}>
            <Select label="Administrateur" w={203} h={23.6} />
          </InputRow>
          <InputRow label={["Mot de passe"]} mt={17.3} pl={111} dy={-4.5} />
          <InputRow label={["Confirmer mdp"]} mt={16.6} pl={111} dy={-4} />
          <Button $w={295} $ml={112.4} $mt={7.5}><T>Modifier</T></Button>
        </BrowserWindow>

        <BrowserWindow x={796} y={2865} h={431} head={65} nav={memberNav("Accue", "Utilisateur", [47.4, 57, 2.5, 3.5, 97.5, 4.5])} navH={30} foot={26}
          brandTop={8.4} sub="Modifier mot de passe" subW={244} subGap={0} subDy={3.5} panelLeft={91} panelTop={4.6} panelH={235}>
          <PanelTitle text="Modifier mot de passe" w={245} mt={11.8} pl={162} />
          <Rule $w={218} $ml={163} $mt={6.3} />
          <InputRow label={["Mot de passe", "actuel"]} mt={18.3} pl={111} dy={-2.4} lh={17.5} />
          <InputRow label={["Mot de passe"]} mt={17.4} pl={111} dy={-4.5} />
          <InputRow label={["Confirmer mdp"]} mt={16} pl={111} dy={-4} />
          <Button $w={295} $ml={112.4} $mt={8}><T>Modifier</T></Button>
        </BrowserWindow>

        <BrowserWindow x={1722} y={13} h={944} head={64}
          nav={memberNav("Accueil", "Utilisateur", [47.5, 66.5, 4.5, 3, 90, 1.8], ["Mon compte", "Mes recettes"], 40)} navH={30} foot={26}
          brandTop={9.5} sub="Recette" subW={89} subGap={2} subDy={3} panelLeft={91} panelTop={5.3} panelH={751}>
          <PanelTitle text="Titre" w={50} mt={10} pl={247} />
          <Row $h={18} $mt={8.5} $pl={316}><T>Ingrédients nécessaires</T></Row>
          <Row $h={125} $mt={7.5} $pl={30}>
            <Picture $h={125} $w={243.5} $boxed><Cross w={239.5} h={121} /></Picture>
            <Gap $w={43.5} />
            <ListBox $pl={5}>
              {["Banane", "Kiwi", "Lait", "Sucre"].map((i) => <ListItem key={i}><T>{i}</T></ListItem>)}
            </ListBox>
            <ListBox $pl={6}>
              {["1", "2", "300cl", "10g"].map((i) => <ListItem key={i}><T>{i}</T></ListItem>)}
            </ListBox>
          </Row>
          <Row $h={18} $mt={24} $pl={29}><T>Preparation de la recette</T></Row>
          <TextBox $w={456} $h={139} $ml={30} $mt={2.7}>
            <Row $h={20} $mt={6.5} $pl={13}><T>{LOREM + ", sed do eiusmod"}</T></Row>
            <Row $h={20} $mt={1} $pl={13}><T>tempor incididunt ut labore et dolore magna aliqua. Ut enim ad minim</T></Row>
            <Row $h={20} $mt={4} $pl={13}><T>veniam, quis nostrud exercitation ullamco laboris nisi ut aliquip ex ea</T></Row>
            <Row $h={16} $pl={13}><T size={9} w={8.5}>...</T></Row>
          </TextBox>
          <Row $h={24} $mt={19.5} $pl={29}>
            <Label $w={101}><T>Auteur</T></Label>
            <Label $w={103}><T>Date d'ajout</T></Label>
            <Label $w={140.5}><T>Note moyenne</T></Label>
            <Button $w={115} $h={24}><T>Noter la recette</T></Button>
          </Row>
          <PanelTitle text="Commentaires" w={158} mt={40} pl={187} />
          <Rule $w={460} $ml={30} $mt={12} />
          <Row $h={18} $mt={4.5} $pl={195}><T>Ajouter un commentaire</T></Row>
          <Row $h={49} $mt={11.5} $pl={30}>
            <TextBox $w={362} $h={49} />
            <Button $w={95} $h={23} $ml={1.5}><T>Commenter</T></Button>
          </Row>
          <Rule $w={460} $ml={30} $mt={16.5} />
          <Comment mt={28.5} />
          <Rule $w={247} $ml={125.6} $mt={6} />
          <Comment mt={4.9} />
          <Rule $w={247} $ml={125.6} $mt={6.5} />
          <Comment mt={4.5} />
          <Rule $w={247} $ml={125.6} $mt={14.5} />
        </BrowserWindow>

        <BrowserWindow x={2528} y={13} h={769} head={67}
          nav={memberNav("Accueil", "Utilisateur", [48, 67, 3.8, 2.8, 89.5, 2])} navH={30} foot={26}
          brandTop={6.3} sub="Editer une recette" subW={200} subGap={3.5} subDy={3} panelLeft={87.4} panelTop={5.5} panelH={574}>
          <InputRow label={["Titre"]} mt={40} pl={128} h={25} dy={-1} />
          <InputRow label={["Catégories"]} mt={13.7} pl={128} h={23}><Select label="Catégories" w={204} h={23} /></InputRow>
          <InputRow label={["Nombre", "d'ingédients"]} mt={10.7} pl={128} h={26.5} dy={1.5} lh={13.3}>
            <Field $w={204} $h={26.5}><T>4</T></Field>
          </InputRow>
          {[10, 10.8, 8.6, 6.2].map((mt, i) => (
            <InputRow key={mt} label={i ? [] : ["Ingrédients", "et quantitées"]} mt={mt} pl={128} h={25} dy={i ? 0 : 8} lh={18}>
              <Select label="Ingrédient" w={105} h={24} />
              <Field $w={99} $h={25}><T>Quantité</T></Field>
            </InputRow>
          ))}
          <Row $h={140} $mt={21.5} $pl={128} $top>
            <Label $w={91} $dy={2.5} $lh={13.3}><T>Réalisation</T><T>de la recette</T></Label>
            <TextBox $w={204} $h={140} />
          </Row>
          <Row $h={24} $mt={9} $pl={128}>
            <Label $w={107}><T>Ajouter un image</T></Label>
            <Button $w={181} $h={24}><T>Ajouter un image</T></Button>
          </Row>
          <Row $h={24} $mt={32.5} $pl={219}>
            <Button $w={86} $h={24}><T>Annuler</T></Button>
            <Button $w={111} $h={24} $ml={5}><T>Envoyé</T></Button>
          </Row>
        </BrowserWindow>

        <Pinned $x={777} $y={13}>
          <Nav framed h={32} items={[
            { label: "Accueil", gap: 53.5, w: 62 },
            { label: "Liste des recettes", gap: 2.8, w: 130 },
            { label: "Connexion", gap: 314, w: 81.5 },
            { label: "Inscription", gap: 6, w: 81.5 },
          ]} />
        </Pinned>
        <Pinned $x={777} $y={84}>
          <Nav framed h={32} items={[
            { label: "Accueil", gap: 53.5, w: 62 },
            { label: "Liste des recettes", gap: 2.8, w: 130 },
            { label: "Ajouter une recette", gap: 2.5, w: 137 },
            { label: "Utilisateur", gap: 133.5, w: 113, select: true, menu: ["Mon compte", "Mes recettes"], menuH: 55 },
            { label: "Deconnexion", gap: 3, w: 94.5 },
          ]} />
        </Pinned>
        <Pinned $x={777} $y={184}>
          <Nav framed h={32} items={[
            { label: "Accueil", gap: 53.5, w: 62 },
            { label: "Liste des recettes", gap: 2.8, w: 130 },
            { label: "Ajouter une recette", gap: 2.5, w: 137 },
            { label: "Administrateur", gap: 89, w: 157.5, select: true, menu: ["Mon compte", "Mes recettes", "Gestion des utilisateurs"], menuH: 70 },
            { label: "Deconnexion", gap: 3, w: 94.5 },
          ]} />
        </Pinned>

        <Pinned $x={804} $y={324}><Card tall /></Pinned>
        <Pinned $x={777} $y={838}>
          <Select label="Trier les recettes" w={133}
            menu={["Plus récentes", "Plus anciennes", "Mieux notées", "Moins bien notées", "Mes recettes"]} menuH={86} />
        </Pinned>

        <Heading $x={1062.5} $y={430}><T size={22.5} w={218}>Utilisateur anonyme</T></Heading>
        <Heading $x={1001} $y={1045}><T size={22.5} w={221}>Utilisateur connecté</T></Heading>
        <Heading $x={965.5} $y={1554}><T size={22.5} w={156}>Administrateur</T></Heading>

        <Canvas width="3256" height="2200" viewBox="0 0 3256 2200">
          {links.map((l, i) => <LinkLine key={i} {...l} />)}
        </Canvas>
        {nodes.map(([x, y, w, h, ...lines], i) => (
          <Ellipse key={i} $x={x} $y={y} $w={w} $h={h}>
            {lines.map((l) => <T key={l}>{l}</T>)}
          </Ellipse>
        ))}

        <Pinned $x={2065} $y={1454}>
          <LegendList>
            <LegendItem $mt={0} $ml={1.5}><T size={13} w={127}>Utilisateur anonyme</T><Swatch $color={INK} /></LegendItem>
            <LegendItem $mt={21} $ml={0.5}><T size={13} w={130}>Utilisateur connecté</T><Swatch $color="#cc0000" /></LegendItem>
            <LegendItem $mt={24} $ml={0}><T size={13} w={208}>Utilisateur connecté propriétaire</T><Swatch $color="#cc0000" $dotted /></LegendItem>
            <LegendItem $mt={21.5} $ml={0}><T size={13} w={91}>Administrateur</T><Swatch $color={GREEN} /></LegendItem>
          </LegendList>
        </Pinned>

        <Credit><T size={12.5} w={239}>Created with Balsamiq - www.balsamiq.com</T></Credit>
      </Board>
    </>
  );
}
